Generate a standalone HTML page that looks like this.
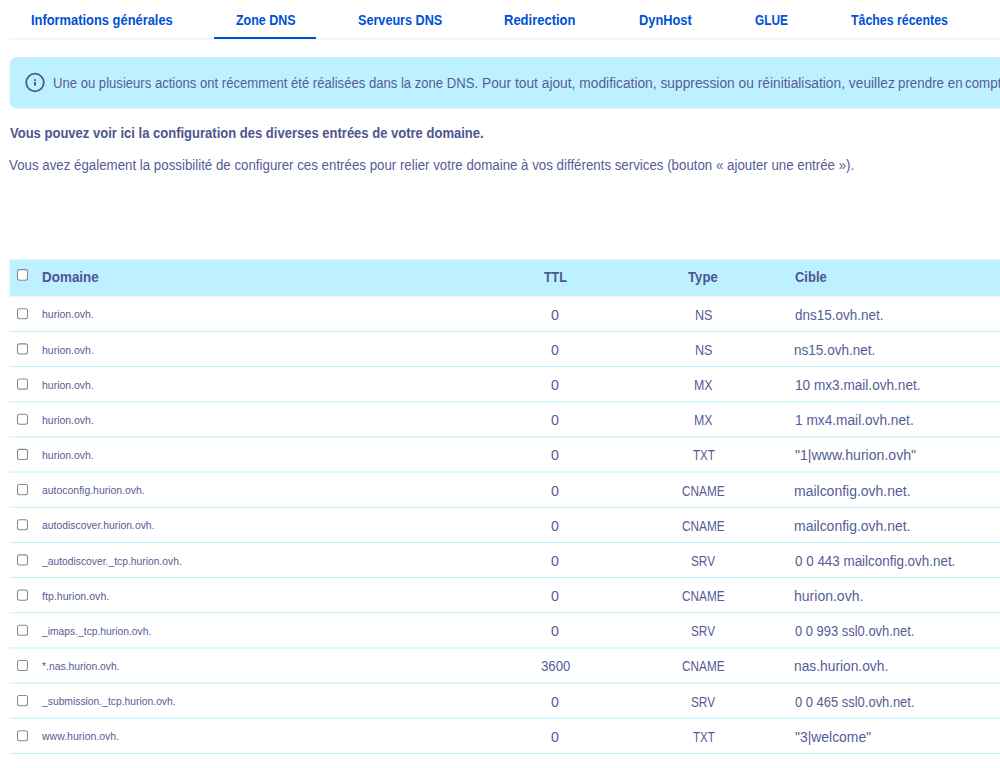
<!DOCTYPE html><html><head><meta charset="utf-8"><style>
html,body{margin:0;padding:0;background:#fff;width:1000px;height:768px;overflow:hidden;position:relative;font-family:'Liberation Sans', sans-serif;}
.t{position:absolute;white-space:nowrap;transform-origin:0 0;}
</style></head><body>
<svg style="position:absolute;left:0;top:0" width="1000" height="60" viewBox="0 0 1000 60"><rect x="9.5" y="38.45" width="990.5" height="1" fill="#e1f0fa"/></svg>
<div style="position:absolute;left:214px;top:37px;width:102px;height:2px;background:#0050d7"></div>
<svg style="position:absolute;left:0;top:0" width="1000" height="768" viewBox="0 0 1000 768"><rect x="9.5" y="57" width="1020" height="51.4" rx="7.5" fill="#bef1ff"/></svg>
<svg style="position:absolute;left:24px;top:72px" width="22" height="22" viewBox="0 0 22 22"><circle cx="11" cy="10.5" r="8.8" fill="none" stroke="#4d5592" stroke-width="1.8"/><rect x="10" y="7.3" width="2" height="1.6" fill="#4d5592"/><rect x="10" y="10" width="2" height="3.6" fill="#4d5592"/></svg>
<svg style="position:absolute;left:0;top:0" width="1000" height="768" viewBox="0 0 1000 768"><rect x="9.5" y="259.5" width="990.5" height="36.9" fill="#bef1ff"/></svg>
<svg style="position:absolute;left:0;top:0" width="1000" height="768" viewBox="0 0 1000 768" shape-rendering="geometricPrecision"><rect x="9.5" y="330.90" width="990.5" height="1" fill="#bef1ff"/><rect x="9.5" y="366.07" width="990.5" height="1" fill="#bef1ff"/><rect x="9.5" y="401.24" width="990.5" height="1" fill="#bef1ff"/><rect x="9.5" y="436.41" width="990.5" height="1" fill="#bef1ff"/><rect x="9.5" y="471.58" width="990.5" height="1" fill="#bef1ff"/><rect x="9.5" y="506.75" width="990.5" height="1" fill="#bef1ff"/><rect x="9.5" y="541.92" width="990.5" height="1" fill="#bef1ff"/><rect x="9.5" y="577.09" width="990.5" height="1" fill="#bef1ff"/><rect x="9.5" y="612.26" width="990.5" height="1" fill="#bef1ff"/><rect x="9.5" y="647.43" width="990.5" height="1" fill="#bef1ff"/><rect x="9.5" y="682.60" width="990.5" height="1" fill="#bef1ff"/><rect x="9.5" y="717.77" width="990.5" height="1" fill="#bef1ff"/><rect x="9.5" y="752.94" width="990.5" height="1" fill="#bef1ff"/></svg>
<svg style="position:absolute;left:0;top:0" width="1000" height="768" viewBox="0 0 1000 768"><rect x="17.5" y="308.70" width="10" height="10.1" rx="2" fill="#fff" stroke="#8a8a8a" stroke-width="1.05"/><rect x="17.5" y="343.87" width="10" height="10.1" rx="2" fill="#fff" stroke="#8a8a8a" stroke-width="1.05"/><rect x="17.5" y="379.04" width="10" height="10.1" rx="2" fill="#fff" stroke="#8a8a8a" stroke-width="1.05"/><rect x="17.5" y="414.21" width="10" height="10.1" rx="2" fill="#fff" stroke="#8a8a8a" stroke-width="1.05"/><rect x="17.5" y="449.38" width="10" height="10.1" rx="2" fill="#fff" stroke="#8a8a8a" stroke-width="1.05"/><rect x="17.5" y="484.55" width="10" height="10.1" rx="2" fill="#fff" stroke="#8a8a8a" stroke-width="1.05"/><rect x="17.5" y="519.72" width="10" height="10.1" rx="2" fill="#fff" stroke="#8a8a8a" stroke-width="1.05"/><rect x="17.5" y="554.89" width="10" height="10.1" rx="2" fill="#fff" stroke="#8a8a8a" stroke-width="1.05"/><rect x="17.5" y="590.06" width="10" height="10.1" rx="2" fill="#fff" stroke="#8a8a8a" stroke-width="1.05"/><rect x="17.5" y="625.23" width="10" height="10.1" rx="2" fill="#fff" stroke="#8a8a8a" stroke-width="1.05"/><rect x="17.5" y="660.40" width="10" height="10.1" rx="2" fill="#fff" stroke="#8a8a8a" stroke-width="1.05"/><rect x="17.5" y="695.57" width="10" height="10.1" rx="2" fill="#fff" stroke="#8a8a8a" stroke-width="1.05"/><rect x="17.5" y="730.74" width="10" height="10.1" rx="2" fill="#fff" stroke="#8a8a8a" stroke-width="1.05"/><rect x="17.5" y="269.6" width="10" height="10.6" rx="2" fill="#fff" stroke="#8a8a8a" stroke-width="1.05"/></svg>
<div class="t" id="t0" style="left:30.59px;top:10.15px;font-size:14px;line-height:20px;font-weight:700;color:#0050d7;transform:scaleX(0.9202)">Informations générales</div>
<div class="t" id="t1" style="left:236.04px;top:10.15px;font-size:14px;line-height:20px;font-weight:700;color:#0050d7;transform:scaleX(0.8908)">Zone DNS</div>
<div class="t" id="t2" style="left:357.69px;top:10.15px;font-size:14px;line-height:20px;font-weight:700;color:#0050d7;transform:scaleX(0.9021)">Serveurs DNS</div>
<div class="t" id="t3" style="left:504.05px;top:10.15px;font-size:14px;line-height:20px;font-weight:700;color:#0050d7;transform:scaleX(0.9274)">Redirection</div>
<div class="t" id="t4" style="left:638.61px;top:10.15px;font-size:14px;line-height:20px;font-weight:700;color:#0050d7;transform:scaleX(0.9168)">DynHost</div>
<div class="t" id="t5" style="left:754.57px;top:10.15px;font-size:14px;line-height:20px;font-weight:700;color:#0050d7;transform:scaleX(0.8463)">GLUE</div>
<div class="t" id="t6" style="left:850.91px;top:10.15px;font-size:14px;line-height:20px;font-weight:700;color:#0050d7;transform:scaleX(0.8833)">Tâches récentes</div>
<div class="t" id="t7" style="left:52.59px;top:73.15px;font-size:14px;line-height:20px;font-weight:400;color:#565c97;transform:scaleX(0.9353)">Une ou plusieurs actions ont récemment été réalisées dans la zone DNS.</div>
<div class="t" id="t8" style="left:481.65px;top:73.15px;font-size:14px;line-height:20px;font-weight:400;color:#565c97;transform:scaleX(0.9841)">Pour tout ajout, modification, suppression ou réinitialisation, veuillez</div>
<div class="t" id="t9" style="left:897.97px;top:73.15px;font-size:14px;line-height:20px;font-weight:400;color:#565c97;transform:scaleX(0.9534)">prendre en</div>
<div class="t" id="t10" style="left:965.03px;top:73.15px;font-size:14px;line-height:20px;font-weight:400;color:#565c97;transform:scaleX(0.9534)">compte les tâches en cours.</div>
<div class="t" id="t11" style="left:9.81px;top:123.15px;font-size:14px;line-height:20px;font-weight:700;color:#4d5592;transform:scaleX(0.9299)">Vous pouvez voir ici la configuration des diverses entrées de votre domaine.</div>
<div class="t" id="t12" style="left:8.97px;top:155.15px;font-size:14px;line-height:20px;font-weight:400;color:#565c97;transform:scaleX(0.9496)">Vous avez également la possibilité de configurer ces entrées pour relier votre domaine à vos différents services (bouton « ajouter une entrée »).</div>
<div class="t" id="t13" style="left:41.80px;top:267.15px;font-size:14px;line-height:20px;font-weight:700;color:#4d5592;transform:scaleX(0.9604)">Domaine</div>
<div class="t" id="t14" style="left:544.32px;top:267.15px;font-size:14px;line-height:20px;font-weight:700;color:#4d5592;transform:scaleX(0.8903)">TTL</div>
<div class="t" id="t15" style="left:687.85px;top:267.15px;font-size:14px;line-height:20px;font-weight:700;color:#4d5592;transform:scaleX(0.9399)">Type</div>
<div class="t" id="t16" style="left:794.98px;top:267.15px;font-size:14px;line-height:20px;font-weight:700;color:#4d5592;transform:scaleX(0.9266)">Cible</div>
<div class="t" id="t17" style="left:42.18px;top:304.36px;font-size:10.5px;line-height:20px;font-weight:400;color:#565c97;transform:scaleX(0.9970)">hurion.ovh.</div>
<div class="t" id="t18" style="left:551.03px;top:304.75px;font-size:14px;line-height:20px;font-weight:400;color:#565c97;transform:scaleX(1.0113)">0</div>
<div class="t" id="t19" style="left:694.72px;top:304.75px;font-size:14px;line-height:20px;font-weight:400;color:#565c97;transform:scaleX(0.9003)">NS</div>
<div class="t" id="t20" style="left:794.74px;top:304.75px;font-size:14px;line-height:20px;font-weight:400;color:#565c97;transform:scaleX(0.9641)">dns15.ovh.net.</div>
<div class="t" id="t21" style="left:42.18px;top:339.53px;font-size:10.5px;line-height:20px;font-weight:400;color:#565c97;transform:scaleX(0.9970)">hurion.ovh.</div>
<div class="t" id="t22" style="left:551.03px;top:339.92px;font-size:14px;line-height:20px;font-weight:400;color:#565c97;transform:scaleX(1.0113)">0</div>
<div class="t" id="t23" style="left:694.72px;top:339.92px;font-size:14px;line-height:20px;font-weight:400;color:#565c97;transform:scaleX(0.9003)">NS</div>
<div class="t" id="t24" style="left:793.89px;top:339.92px;font-size:14px;line-height:20px;font-weight:400;color:#565c97;transform:scaleX(0.9676)">ns15.ovh.net.</div>
<div class="t" id="t25" style="left:42.18px;top:374.70px;font-size:10.5px;line-height:20px;font-weight:400;color:#565c97;transform:scaleX(0.9970)">hurion.ovh.</div>
<div class="t" id="t26" style="left:551.03px;top:375.09px;font-size:14px;line-height:20px;font-weight:400;color:#565c97;transform:scaleX(1.0113)">0</div>
<div class="t" id="t27" style="left:693.50px;top:375.09px;font-size:14px;line-height:20px;font-weight:400;color:#565c97;transform:scaleX(0.8810)">MX</div>
<div class="t" id="t28" style="left:794.86px;top:375.09px;font-size:14px;line-height:20px;font-weight:400;color:#565c97;transform:scaleX(0.9721)">10 mx3.mail.ovh.net.</div>
<div class="t" id="t29" style="left:42.18px;top:409.87px;font-size:10.5px;line-height:20px;font-weight:400;color:#565c97;transform:scaleX(0.9970)">hurion.ovh.</div>
<div class="t" id="t30" style="left:551.03px;top:410.26px;font-size:14px;line-height:20px;font-weight:400;color:#565c97;transform:scaleX(1.0113)">0</div>
<div class="t" id="t31" style="left:693.50px;top:410.26px;font-size:14px;line-height:20px;font-weight:400;color:#565c97;transform:scaleX(0.8810)">MX</div>
<div class="t" id="t32" style="left:794.86px;top:410.26px;font-size:14px;line-height:20px;font-weight:400;color:#565c97;transform:scaleX(0.9779)">1 mx4.mail.ovh.net.</div>
<div class="t" id="t33" style="left:42.18px;top:445.04px;font-size:10.5px;line-height:20px;font-weight:400;color:#565c97;transform:scaleX(0.9970)">hurion.ovh.</div>
<div class="t" id="t34" style="left:551.03px;top:445.43px;font-size:14px;line-height:20px;font-weight:400;color:#565c97;transform:scaleX(1.0113)">0</div>
<div class="t" id="t35" style="left:692.88px;top:445.43px;font-size:14px;line-height:20px;font-weight:400;color:#565c97;transform:scaleX(0.8241)">TXT</div>
<div class="t" id="t36" style="left:794.84px;top:445.43px;font-size:14px;line-height:20px;font-weight:400;color:#565c97;transform:scaleX(1.0072)">"1|www.hurion.ovh"</div>
<div class="t" id="t37" style="left:42.07px;top:480.21px;font-size:10.5px;line-height:20px;font-weight:400;color:#565c97;transform:scaleX(0.9946)">autoconfig.hurion.ovh.</div>
<div class="t" id="t38" style="left:551.03px;top:480.60px;font-size:14px;line-height:20px;font-weight:400;color:#565c97;transform:scaleX(1.0113)">0</div>
<div class="t" id="t39" style="left:681.64px;top:480.60px;font-size:14px;line-height:20px;font-weight:400;color:#565c97;transform:scaleX(0.8423)">CNAME</div>
<div class="t" id="t40" style="left:793.96px;top:480.60px;font-size:14px;line-height:20px;font-weight:400;color:#565c97;transform:scaleX(0.9983)">mailconfig.ovh.net.</div>
<div class="t" id="t41" style="left:42.03px;top:515.38px;font-size:10.5px;line-height:20px;font-weight:400;color:#565c97;transform:scaleX(0.9883)">autodiscover.hurion.ovh.</div>
<div class="t" id="t42" style="left:551.03px;top:515.77px;font-size:14px;line-height:20px;font-weight:400;color:#565c97;transform:scaleX(1.0113)">0</div>
<div class="t" id="t43" style="left:681.64px;top:515.77px;font-size:14px;line-height:20px;font-weight:400;color:#565c97;transform:scaleX(0.8423)">CNAME</div>
<div class="t" id="t44" style="left:793.96px;top:515.77px;font-size:14px;line-height:20px;font-weight:400;color:#565c97;transform:scaleX(0.9983)">mailconfig.ovh.net.</div>
<div class="t" id="t45" style="left:42.17px;top:550.55px;font-size:10.5px;line-height:20px;font-weight:400;color:#565c97;transform:scaleX(0.9815)">_autodiscover._tcp.hurion.ovh.</div>
<div class="t" id="t46" style="left:551.03px;top:550.94px;font-size:14px;line-height:20px;font-weight:400;color:#565c97;transform:scaleX(1.0113)">0</div>
<div class="t" id="t47" style="left:691.25px;top:550.94px;font-size:14px;line-height:20px;font-weight:400;color:#565c97;transform:scaleX(0.8430)">SRV</div>
<div class="t" id="t48" style="left:795.09px;top:550.94px;font-size:14px;line-height:20px;font-weight:400;color:#565c97;transform:scaleX(0.9582)">0 0 443 mailconfig.ovh.net.</div>
<div class="t" id="t49" style="left:41.83px;top:585.72px;font-size:10.5px;line-height:20px;font-weight:400;color:#565c97;transform:scaleX(1.0102)">ftp.hurion.ovh.</div>
<div class="t" id="t50" style="left:551.03px;top:586.11px;font-size:14px;line-height:20px;font-weight:400;color:#565c97;transform:scaleX(1.0113)">0</div>
<div class="t" id="t51" style="left:681.64px;top:586.11px;font-size:14px;line-height:20px;font-weight:400;color:#565c97;transform:scaleX(0.8423)">CNAME</div>
<div class="t" id="t52" style="left:794.00px;top:586.11px;font-size:14px;line-height:20px;font-weight:400;color:#565c97;transform:scaleX(1.0013)">hurion.ovh.</div>
<div class="t" id="t53" style="left:42.13px;top:620.89px;font-size:10.5px;line-height:20px;font-weight:400;color:#565c97;transform:scaleX(0.9806)">_imaps._tcp.hurion.ovh.</div>
<div class="t" id="t54" style="left:551.03px;top:621.28px;font-size:14px;line-height:20px;font-weight:400;color:#565c97;transform:scaleX(1.0113)">0</div>
<div class="t" id="t55" style="left:691.25px;top:621.28px;font-size:14px;line-height:20px;font-weight:400;color:#565c97;transform:scaleX(0.8430)">SRV</div>
<div class="t" id="t56" style="left:794.99px;top:621.28px;font-size:14px;line-height:20px;font-weight:400;color:#565c97;transform:scaleX(0.9243)">0 0 993 ssl0.ovh.net.</div>
<div class="t" id="t57" style="left:42.45px;top:656.06px;font-size:10.5px;line-height:20px;font-weight:400;color:#565c97;transform:scaleX(0.9858)">*.nas.hurion.ovh.</div>
<div class="t" id="t58" style="left:540.57px;top:656.45px;font-size:14px;line-height:20px;font-weight:400;color:#565c97;transform:scaleX(0.9407)">3600</div>
<div class="t" id="t59" style="left:681.64px;top:656.45px;font-size:14px;line-height:20px;font-weight:400;color:#565c97;transform:scaleX(0.8423)">CNAME</div>
<div class="t" id="t60" style="left:794.00px;top:656.45px;font-size:14px;line-height:20px;font-weight:400;color:#565c97;transform:scaleX(0.9844)">nas.hurion.ovh.</div>
<div class="t" id="t61" style="left:42.15px;top:691.23px;font-size:10.5px;line-height:20px;font-weight:400;color:#565c97;transform:scaleX(0.9826)">_submission._tcp.hurion.ovh.</div>
<div class="t" id="t62" style="left:551.03px;top:691.62px;font-size:14px;line-height:20px;font-weight:400;color:#565c97;transform:scaleX(1.0113)">0</div>
<div class="t" id="t63" style="left:691.25px;top:691.62px;font-size:14px;line-height:20px;font-weight:400;color:#565c97;transform:scaleX(0.8430)">SRV</div>
<div class="t" id="t64" style="left:794.97px;top:691.62px;font-size:14px;line-height:20px;font-weight:400;color:#565c97;transform:scaleX(0.9249)">0 0 465 ssl0.ovh.net.</div>
<div class="t" id="t65" style="left:42.15px;top:726.40px;font-size:10.5px;line-height:20px;font-weight:400;color:#565c97;transform:scaleX(1.0009)">www.hurion.ovh.</div>
<div class="t" id="t66" style="left:551.03px;top:726.79px;font-size:14px;line-height:20px;font-weight:400;color:#565c97;transform:scaleX(1.0113)">0</div>
<div class="t" id="t67" style="left:692.88px;top:726.79px;font-size:14px;line-height:20px;font-weight:400;color:#565c97;transform:scaleX(0.8241)">TXT</div>
<div class="t" id="t68" style="left:794.73px;top:726.79px;font-size:14px;line-height:20px;font-weight:400;color:#565c97;transform:scaleX(0.9930)">"3|welcome"</div>
</body></html>
